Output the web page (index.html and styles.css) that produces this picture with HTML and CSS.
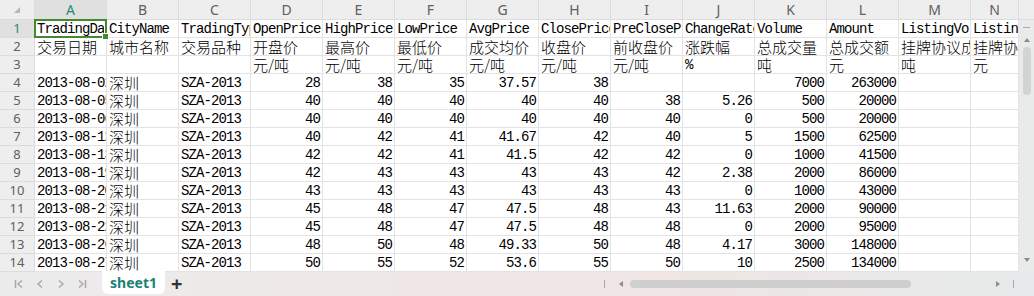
FILE: index.html
```html
<!DOCTYPE html>
<html lang="zh-CN">
  <head>
    <meta charset="UTF-8" />
    <title>sheet1</title>
    <link rel="stylesheet" href="styles.css">
  </head>
  <body>
    <div class="book">
      <div class="view">
        <div class="grid">
          <!-- column headers -->
          <div class="corner"><span class="tri"></span></div>
          <div class="ch on">A</div><div class="ch">B</div><div class="ch">C</div><div class="ch">D</div>
          <div class="ch">E</div><div class="ch">F</div><div class="ch">G</div><div class="ch">H</div>
          <div class="ch">I</div><div class="ch">J</div><div class="ch">K</div><div class="ch">L</div>
          <div class="ch">M</div><div class="ch">N</div>

          <!-- row 1 -->
          <div class="rh on">1</div>
          <div class="c sel"><span class="clip">TradingDate</span></div><div class="c">CityName</div><div class="c">TradingType</div>
          <div class="c">OpenPrice</div><div class="c">HighPrice</div><div class="c">LowPrice</div>
          <div class="c">AvgPrice</div><div class="c">ClosePrice</div><div class="c">PreClosePrice</div>
          <div class="c">ChangeRate</div><div class="c">Volume</div><div class="c">Amount</div>
          <div class="c">ListingVolume</div><div class="c">ListingAmount</div>

          <!-- row 2 -->
          <div class="rh">2</div>
          <div class="c"><span class="zh">交易日期</span></div><div class="c"><span class="zh">城市名称</span></div>
          <div class="c"><span class="zh">交易品种</span></div><div class="c"><span class="zh">开盘价</span></div>
          <div class="c"><span class="zh">最高价</span></div><div class="c"><span class="zh">最低价</span></div>
          <div class="c"><span class="zh">成交均价</span></div><div class="c"><span class="zh">收盘价</span></div>
          <div class="c"><span class="zh">前收盘价</span></div><div class="c"><span class="zh">涨跌幅</span></div>
          <div class="c"><span class="zh">总成交量</span></div><div class="c"><span class="zh">总成交额</span></div>
          <div class="c"><span class="zh">挂牌协议成交量</span></div><div class="c"><span class="zh">挂牌协议成交额</span></div>

          <!-- row 3 -->
          <div class="rh">3</div>
          <div class="c"></div><div class="c"></div><div class="c"></div>
          <div class="c"><span class="zh">元/吨</span></div><div class="c"><span class="zh">元/吨</span></div>
          <div class="c"><span class="zh">元/吨</span></div><div class="c"><span class="zh">元/吨</span></div>
          <div class="c"><span class="zh">元/吨</span></div><div class="c"><span class="zh">元/吨</span></div>
          <div class="c">%</div><div class="c"><span class="zh">吨</span></div><div class="c"><span class="zh">元</span></div>
          <div class="c"><span class="zh">吨</span></div><div class="c"><span class="zh">元</span></div>

          <!-- data rows -->
          <div class="rh">4</div>
          <div class="c">2013-08-02</div><div class="c"><span class="zh">深圳</span></div><div class="c">SZA-2013</div>
          <div class="c n">28</div><div class="c n">38</div><div class="c n">35</div><div class="c n">37.57</div>
          <div class="c n">38</div><div class="c n"></div><div class="c n"></div><div class="c n">7000</div>
          <div class="c n">263000</div><div class="c"></div><div class="c"></div>

          <div class="rh">5</div>
          <div class="c">2013-08-05</div><div class="c"><span class="zh">深圳</span></div><div class="c">SZA-2013</div>
          <div class="c n">40</div><div class="c n">40</div><div class="c n">40</div><div class="c n">40</div>
          <div class="c n">40</div><div class="c n">38</div><div class="c n">5.26</div><div class="c n">500</div>
          <div class="c n">20000</div><div class="c"></div><div class="c"></div>

          <div class="rh">6</div>
          <div class="c">2013-08-06</div><div class="c"><span class="zh">深圳</span></div><div class="c">SZA-2013</div>
          <div class="c n">40</div><div class="c n">40</div><div class="c n">40</div><div class="c n">40</div>
          <div class="c n">40</div><div class="c n">40</div><div class="c n">0</div><div class="c n">500</div>
          <div class="c n">20000</div><div class="c"></div><div class="c"></div>

          <div class="rh">7</div>
          <div class="c">2013-08-12</div><div class="c"><span class="zh">深圳</span></div><div class="c">SZA-2013</div>
          <div class="c n">40</div><div class="c n">42</div><div class="c n">41</div><div class="c n">41.67</div>
          <div class="c n">42</div><div class="c n">40</div><div class="c n">5</div><div class="c n">1500</div>
          <div class="c n">62500</div><div class="c"></div><div class="c"></div>

          <div class="rh">8</div>
          <div class="c">2013-08-13</div><div class="c"><span class="zh">深圳</span></div><div class="c">SZA-2013</div>
          <div class="c n">42</div><div class="c n">42</div><div class="c n">41</div><div class="c n">41.5</div>
          <div class="c n">42</div><div class="c n">42</div><div class="c n">0</div><div class="c n">1000</div>
          <div class="c n">41500</div><div class="c"></div><div class="c"></div>

          <div class="rh">9</div>
          <div class="c">2013-08-19</div><div class="c"><span class="zh">深圳</span></div><div class="c">SZA-2013</div>
          <div class="c n">42</div><div class="c n">43</div><div class="c n">43</div><div class="c n">43</div>
          <div class="c n">43</div><div class="c n">42</div><div class="c n">2.38</div><div class="c n">2000</div>
          <div class="c n">86000</div><div class="c"></div><div class="c"></div>

          <div class="rh">10</div>
          <div class="c">2013-08-20</div><div class="c"><span class="zh">深圳</span></div><div class="c">SZA-2013</div>
          <div class="c n">43</div><div class="c n">43</div><div class="c n">43</div><div class="c n">43</div>
          <div class="c n">43</div><div class="c n">43</div><div class="c n">0</div><div class="c n">1000</div>
          <div class="c n">43000</div><div class="c"></div><div class="c"></div>

          <div class="rh">11</div>
          <div class="c">2013-08-21</div><div class="c"><span class="zh">深圳</span></div><div class="c">SZA-2013</div>
          <div class="c n">45</div><div class="c n">48</div><div class="c n">47</div><div class="c n">47.5</div>
          <div class="c n">48</div><div class="c n">43</div><div class="c n">11.63</div><div class="c n">2000</div>
          <div class="c n">90000</div><div class="c"></div><div class="c"></div>

          <div class="rh">12</div>
          <div class="c">2013-08-22</div><div class="c"><span class="zh">深圳</span></div><div class="c">SZA-2013</div>
          <div class="c n">45</div><div class="c n">48</div><div class="c n">47</div><div class="c n">47.5</div>
          <div class="c n">48</div><div class="c n">48</div><div class="c n">0</div><div class="c n">2000</div>
          <div class="c n">95000</div><div class="c"></div><div class="c"></div>

          <div class="rh">13</div>
          <div class="c">2013-08-26</div><div class="c"><span class="zh">深圳</span></div><div class="c">SZA-2013</div>
          <div class="c n">48</div><div class="c n">50</div><div class="c n">48</div><div class="c n">49.33</div>
          <div class="c n">50</div><div class="c n">48</div><div class="c n">4.17</div><div class="c n">3000</div>
          <div class="c n">148000</div><div class="c"></div><div class="c"></div>

          <div class="rh">14</div>
          <div class="c">2013-08-27</div><div class="c"><span class="zh">深圳</span></div><div class="c">SZA-2013</div>
          <div class="c n">50</div><div class="c n">55</div><div class="c n">52</div><div class="c n">53.6</div>
          <div class="c n">55</div><div class="c n">50</div><div class="c n">10</div><div class="c n">2500</div>
          <div class="c n">134000</div><div class="c"></div><div class="c"></div>
        </div>

        <!-- vertical scrollbar -->
        <div class="vscroll">
          <div class="vs-top"></div>
          <div class="vs-track">
            <span class="vs-dash"></span>
            <span class="arr up"></span>
            <span class="vs-thumb"></span>
            <span class="arr down"></span>
          </div>
        </div>
      </div>

      <!-- sheet tabs -->
      <div class="tabbar">
        <div class="nav">
          <svg width="10" height="10" viewBox="0 0 10 10"><path d="M1.5 1v8M8 1.5L4 5l4 3.5" fill="none" stroke="#a9a9a9" stroke-width="1.5"/></svg>
          <svg width="10" height="10" viewBox="0 0 10 10"><path d="M7 1.5L3 5l4 3.5" fill="none" stroke="#a9a9a9" stroke-width="1.5"/></svg>
          <svg width="10" height="10" viewBox="0 0 10 10"><path d="M3 1.5L7 5 3 8.5" fill="none" stroke="#a9a9a9" stroke-width="1.5"/></svg>
          <svg width="10" height="10" viewBox="0 0 10 10"><path d="M2 1.5L6 5 2 8.5M8.5 1v8" fill="none" stroke="#a9a9a9" stroke-width="1.5"/></svg>
        </div>
        <div class="tab">sheet1</div>
        <div class="add">+</div>
        <div class="hscroll">
          <span class="hs-bar"></span>
          <span class="arr left"></span>
          <span class="hs-thumb"></span>
          <span class="arr right"></span>
          <span class="hs-bar"></span>
        </div>
      </div>
    </div>
  </body>
</html>
```

FILE: styles.css
```css
body {
  margin: 0;
  background: #ffffff;
  font-family: "Noto Sans", "Liberation Sans", sans-serif;
}

.book {
  width: 1034px;
  height: 296px;
  overflow: hidden;
}

.view {
  display: flex;
  height: 272px;
}

.grid {
  display: grid;
  grid-template-columns: 35px repeat(13, 72px) 48px;
  grid-template-rows: 20px;
  grid-auto-rows: 18px;
  width: 1019px;
}

.corner,
.ch,
.rh {
  background: #eeeeee;
  color: #606060;
  box-sizing: border-box;
  border-right: 1px solid #dcdcdc;
  border-bottom: 1px solid #dcdcdc;
}

.corner {
  position: relative;
}

.corner .tri {
  position: absolute;
  left: 14px;
  top: 7px;
  width: 0;
  height: 0;
  border-left: 6px solid transparent;
  border-bottom: 6px solid #b8b8b8;
}

.ch {
  font-size: 14px;
  line-height: 19px;
  text-align: center;
}

.rh {
  font-size: 13px;
  line-height: 17px;
  text-align: center;
}

.ch.on,
.rh.on {
  background: #e0e0e0;
  color: #1f8c76;
}

.c {
  box-sizing: border-box;
  border-right: 1px solid #e3e3e3;
  border-bottom: 1px solid #e3e3e3;
  padding: 0 2px;
  font-family: "Liberation Mono", "Noto Sans CJK SC", monospace;
  font-size: 14px;
  letter-spacing: -0.9px;
  line-height: 18px;
  color: #000000;
  white-space: nowrap;
  overflow: hidden;
}

.c .zh {
  font-family: "Noto Sans CJK SC", sans-serif;
  font-size: 15px;
  font-weight: 300;
  letter-spacing: 0;
  line-height: 17px;
}

.c.n {
  text-align: right;
  padding-right: 2px;
}

/* active cell A1 */
.c.sel {
  position: relative;
  overflow: visible;
}

.c.sel .clip {
  display: block;
  overflow: hidden;
}

.c.sel::before {
  content: "";
  position: absolute;
  left: -1px;
  top: -1px;
  right: -1px;
  bottom: -1px;
  border: 2px solid #43892f;
}

.c.sel::after {
  content: "";
  position: absolute;
  right: -3px;
  bottom: -3px;
  width: 5px;
  height: 5px;
  background: #43892f;
  border: 1px solid #ffffff;
}

.vscroll {
  width: 15px;
  display: flex;
  flex-direction: column;
}

.vs-top {
  height: 20px;
  background: #eeeeee;
  border-bottom: 1px solid #dcdcdc;
  box-sizing: border-box;
}

.vs-track {
  flex: 1;
  background: #e8ebea;
  display: flex;
  flex-direction: column;
  align-items: center;
  padding-top: 7px;
}

.vs-dash {
  width: 7px;
  height: 1px;
  background: #a8a8a8;
}

.vs-thumb {
  width: 8px;
  height: 48px;
  margin-top: 5px;
  border-radius: 4px;
  background: #d2d4d4;
}

.arr {
  width: 0;
  height: 0;
}

.arr.up {
  margin-top: 10px;
  border-left: 3px solid transparent;
  border-right: 3px solid transparent;
  border-bottom: 4px solid #8c8c8c;
}

.arr.down {
  margin-top: auto;
  margin-bottom: 10px;
  border-left: 3px solid transparent;
  border-right: 3px solid transparent;
  border-top: 4px solid #8c8c8c;
}

.tabbar {
  height: 24px;
  display: flex;
  align-items: center;
  background: linear-gradient(90deg, #ececec 0%, #eee7e6 40%, #eee5e4 65%, #e6eaea 100%);
}

.nav {
  display: flex;
  align-items: center;
  gap: 11px;
  padding-left: 14px;
  width: 89px;
  box-sizing: border-box;
}

.tab {
  align-self: stretch;
  width: 63px;
  margin-top: -1px;
  margin-bottom: 2px;
  background: #ffffff;
  border-radius: 0 0 6px 6px;
  color: #1b8276;
  font-weight: bold;
  font-size: 14px;
  line-height: 23px;
  text-align: center;
  margin-left: 13px;
}

.add {
  margin-left: 6px;
  font-size: 20px;
  font-weight: bold;
  color: #333333;
  line-height: 20px;
}

.hscroll {
  margin-left: auto;
  margin-right: 20px;
  width: 410px;
  display: flex;
  align-items: center;
}

.hs-bar {
  width: 1px;
  height: 8px;
  background: #a9a9a9;
}

.hs-thumb {
  width: 281px;
  height: 8px;
  border-radius: 4px;
  background: #cfcfcf;
  margin-left: 7px;
}

.arr.left {
  margin-left: 14px;
  border-top: 3px solid transparent;
  border-bottom: 3px solid transparent;
  border-right: 4px solid #8c8c8c;
}

.arr.right {
  margin-left: auto;
  margin-right: 13px;
  border-top: 3px solid transparent;
  border-bottom: 3px solid transparent;
  border-left: 4px solid #8c8c8c;
}
```
